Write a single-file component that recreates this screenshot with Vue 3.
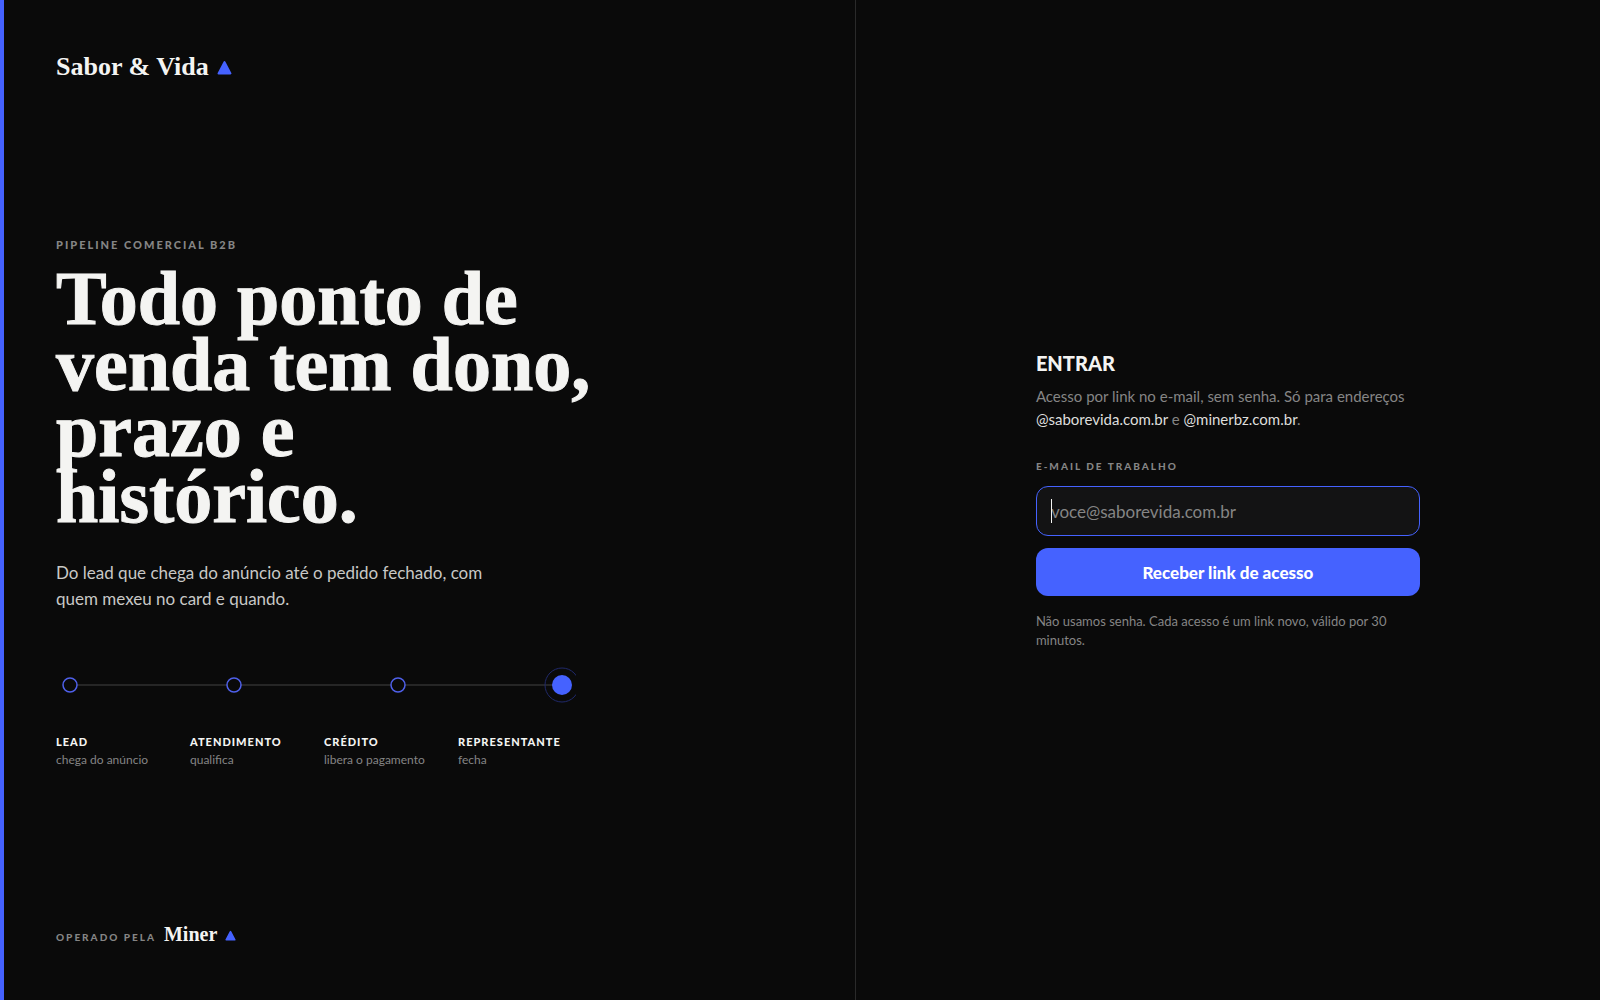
<script setup>
import { ref } from 'vue'

const email = ref('')
const steps = [
  { name: 'LEAD', note: 'chega do anúncio' },
  { name: 'ATENDIMENTO', note: 'qualifica' },
  { name: 'CRÉDITO', note: 'libera o pagamento' },
  { name: 'REPRESENTANTE', note: 'fecha' },
]
</script>

<template>
  <div class="page">
    <section class="story">
      <header class="brand">
        <span>Sabor &amp; Vida</span>
        <svg class="mark" viewBox="0 0 14 14" aria-hidden="true">
          <path d="M7 2 12.5 12.5H1.5Z" />
        </svg>
      </header>

      <div class="pitch">
        <p class="eyebrow">PIPELINE COMERCIAL B2B</p>
        <h1>Todo ponto de venda tem dono, prazo e histórico.</h1>
        <p class="lead">Do lead que chega do anúncio até o pedido fechado, com quem mexeu no card e quando.</p>
        <svg class="track" viewBox="0 0 520 56" aria-hidden="true">
          <path class="line" d="M14 28H506" />
          <circle class="dot" cx="14" cy="28" r="7" />
          <circle class="dot" cx="178" cy="28" r="7" />
          <circle class="dot" cx="342" cy="28" r="7" />
          <circle class="halo" cx="506" cy="28" r="17" />
          <circle class="end" cx="506" cy="28" r="10" />
        </svg>
        <ol class="steps">
          <li v-for="step in steps" :key="step.name">
            <strong>{{ step.name }}</strong>
            <span>{{ step.note }}</span>
          </li>
        </ol>
      </div>

      <footer class="operator">
        <span class="by">OPERADO PELA</span>
        <span class="miner">Miner</span>
        <svg class="mark small" viewBox="0 0 14 14" aria-hidden="true">
          <path d="M7 2 12.5 12.5H1.5Z" />
        </svg>
      </footer>
    </section>

    <main class="access">
      <form class="form" @submit.prevent>
        <h2>ENTRAR</h2>
        <p class="intro">
          Acesso por link no e-mail, sem senha. Só para endereços
          <b>@saborevida.com.br</b> e <b>@minerbz.com.br</b>.
        </p>
        <label for="email">E-MAIL DE TRABALHO</label>
        <div class="field">
          <input id="email" v-model="email" type="email" placeholder="voce@saborevida.com.br" />
          <span v-if="!email" class="caret"></span>
        </div>
        <button type="submit">Receber link de acesso</button>
        <p class="hint">Não usamos senha. Cada acesso é um link novo, válido por 30 minutos.</p>
      </form>
    </main>
  </div>
</template>

<style>
body {
  margin: 0;
  background: #0a0a0a;
}
</style>

<style scoped>
.page {
  display: grid;
  grid-template-columns: 1.15fr 1fr;
  min-height: 100vh;
  background: #0a0a0a;
  color: #f4f4f2;
  font-family: Lato, "Liberation Sans", sans-serif;
}
h1, h2, p, ol {
  margin: 0;
}
.story {
  display: flex;
  flex-direction: column;
  justify-content: space-between;
  box-sizing: border-box;
  padding: 48px 52px;
  border-left: 4px solid #4562ff;
  border-right: 1px solid #2a2a2a;
}
.brand, .miner, h1 {
  font-family: "Liberation Serif", serif;
  font-weight: 700;
}
.brand {
  display: flex;
  align-items: center;
  gap: 8px;
  font-size: 26px;
  line-height: 38px;
}
.mark {
  width: 15px;
  height: 15px;
  fill: #4562ff;
  stroke: #4562ff;
  stroke-width: 2;
  stroke-linejoin: round;
}
.mark.small {
  width: 11px;
  height: 11px;
}
.eyebrow, .by, label {
  font-size: 10px;
  line-height: 16px;
  font-weight: 900;
  letter-spacing: 2px;
  color: #858585;
}
.pitch {
  padding-top: 4px;
}
.eyebrow {
  font-size: 11px;
}
h1 {
  max-width: 544px;
  margin-top: 12px;
  font-size: 76px;
  line-height: 66px;
  -webkit-text-stroke: 1px currentColor;
}
.lead {
  max-width: 440px;
  margin-top: 31px;
  font-size: 17px;
  line-height: 26px;
  color: #c8c8c6;
}
.track {
  display: block;
  width: 100%;
  max-width: 520px;
  margin-top: 45px;
  overflow: hidden;
}
.line {
  stroke: #262626;
  stroke-width: 2;
}
.dot {
  fill: #0a0a0a;
  stroke: #4f60ea;
  stroke-width: 1.5;
}
.halo {
  fill: none;
  stroke: #20296a;
}
.end {
  fill: #4562ff;
}
.steps {
  display: grid;
  grid-template-columns: repeat(4, 1fr);
  gap: 16px;
  max-width: 520px;
  margin-top: 20px;
  padding: 0;
  list-style: none;
}
.steps li {
  display: flex;
  flex-direction: column;
  white-space: nowrap;
}
.steps strong {
  font-size: 11px;
  line-height: 18px;
  font-weight: 900;
  letter-spacing: 1px;
}
.steps span {
  font-size: 12px;
  line-height: 18px;
  color: #858585;
}
.operator {
  display: flex;
  align-items: baseline;
  gap: 8px;
}
.miner {
  font-size: 20px;
  line-height: 36px;
}
.access {
  display: flex;
  align-items: center;
  justify-content: center;
  padding: 48px;
}
.form {
  display: flex;
  flex-direction: column;
  width: 100%;
  max-width: 384px;
}
h2 {
  font-size: 20px;
  line-height: 26px;
  font-weight: 900;
}
.intro {
  margin-top: 9px;
  font-size: 15px;
  line-height: 23px;
  color: #858585;
}
.intro b {
  font-weight: 400;
  color: #dededc;
}
label {
  margin-top: 27px;
}
.field {
  position: relative;
  margin-top: 12px;
}
input {
  display: block;
  box-sizing: border-box;
  width: 100%;
  height: 50px;
  padding: 0 14px;
  border: 1px solid #4562ff;
  border-radius: 12px;
  outline: none;
  background: #131314;
  color: #f4f4f2;
  font: inherit;
  font-size: 17px;
}
input::placeholder {
  color: #858585;
  opacity: 1;
}
.caret {
  position: absolute;
  top: 13px;
  left: 15px;
  width: 1px;
  height: 24px;
  background: #f4f4f2;
}
button {
  height: 48px;
  margin-top: 12px;
  border: 0;
  border-radius: 12px;
  background: #4562ff;
  color: #fff;
  font: inherit;
  font-size: 17px;
  font-weight: 900;
}
.hint {
  margin-top: 16px;
  font-size: 13px;
  line-height: 19px;
  color: #858585;
}
</style>
